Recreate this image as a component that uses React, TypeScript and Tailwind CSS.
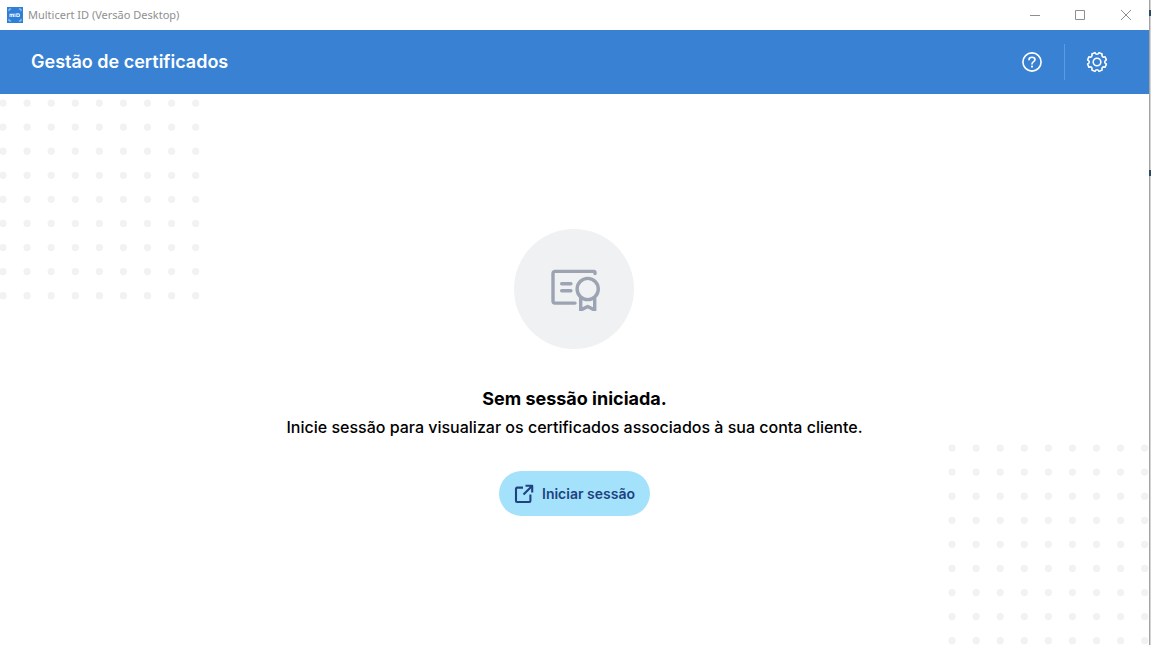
import React from 'react';

const dots = Array.from({ length: 9 }, (_, i) => i * 24 + 4);

const DotGrid = ({ className }: { className: string }) => (
  <svg className={className} width="201" height="201" viewBox="0 0 200.3 200.3" fill="#f1f2f4" aria-hidden="true">
    {dots.map((y) => dots.map((x) => <circle key={`${x}-${y}`} cx={x} cy={y} r="3.6" />))}
  </svg>
);

const LogoIcon = () => (
  <svg width="16" height="16" viewBox="0 0 16 16" fill="none" aria-hidden="true">
    <rect width="16" height="16" fill="#2f7fd6" />
    <path d="M2 4.2V2h2.2M11.8 2H14v2.2M14 11.8V14h-2.2M4.2 14H2v-2.2" stroke="#a9cdf2" />
    <path d="M3 10V7.4h3.4V10M4.7 7.5V10M8 6.4V10" stroke="#dcebfb" strokeWidth="1.1" />
    <path d="M9.8 6.9h1.5a1.3 1.3 0 0 1 0 2.6H9.8z" stroke="#dcebfb" strokeWidth="1.1" />
  </svg>
);

const HelpIcon = () => (
  <svg width="20" height="20" viewBox="0 0 20 20" fill="none" stroke="currentColor" strokeWidth="1.6" aria-hidden="true">
    <circle cx="10" cy="10" r="9.1" />
    <path d="M7 7.8C7 6.2 8.3 5.3 10 5.3s3 .9 3 2.4c0 1.9-3 1.9-3 4.2" strokeLinecap="round" />
    <circle cx="10" cy="14.6" r="1.1" fill="currentColor" stroke="none" />
  </svg>
);

const toothAngles = Array.from({ length: 8 }, (_, i) => 22.5 + i * 45);

const polar = (radius: number, degrees: number) => {
  const angle = (degrees * Math.PI) / 180;
  return `${(10 + radius * Math.cos(angle)).toFixed(2)} ${(10 + radius * Math.sin(angle)).toFixed(2)}`;
};

// each tooth is a short flat edge, followed by a rounded valley
const gearPath =
  toothAngles
    .map((a, i) => `${i === 0 ? 'M' : 'L'}${polar(9.6, a - 10)}L${polar(9.6, a + 10)}C${polar(7.2, a + 14)} ${polar(7.2, a + 31)} ${polar(9.6, a + 35)}`)
    .join('') + 'Z';

const GearIcon = () => (
  <svg className="overflow-visible" width="20" height="20" viewBox="0 0 20 20" fill="none" stroke="currentColor" strokeWidth="1.6" strokeLinejoin="round" aria-hidden="true">
    <path d={gearPath} />
    <circle cx="10" cy="10" r="3.8" />
  </svg>
);

const CertificateIcon = () => (
  <svg width="52" height="44" viewBox="0 0 52 44" fill="none" stroke="#9ca3b2" strokeWidth="3.4" strokeLinecap="round" strokeLinejoin="round" aria-hidden="true">
    <path d="M47 6.6V5.6a1.2 1.2 0 0 0-1.2-1.2H7a2 2 0 0 0-2 2v27.7a2 2 0 0 0 2 2h20" />
    <path d="M13.7 16.8h9.2M13.7 23.7h9.2" />
    <circle cx="39.7" cy="22" r="10.6" />
    <path d="M32.7 31.5v11.6l7-3.6 7 3.6V31.5" />
  </svg>
);

const OpenIcon = () => (
  <svg width="20" height="20" viewBox="0 0 20 20" fill="none" stroke="currentColor" strokeWidth="2.1" strokeLinejoin="round" aria-hidden="true">
    <path d="M9 3.6H3a1 1 0 0 0-1 1V17a1 1 0 0 0 1 1h12.4a1 1 0 0 0 1-1v-6.4" />
    <path d="M11.5 1.8h6.7v6.7M18 2l-8.5 8.5" />
  </svg>
);

const TitleBar = () => (
  <div className="flex h-[30px] items-center bg-white pb-px pl-[7px] text-[#8f8f8f]">
    <LogoIcon />
    <span className="ml-[5px] font-['Noto_Sans',sans-serif] text-[11px] leading-4">Multicert ID (Versão Desktop)</span>
    <div className="ml-auto flex h-full items-center">
      <button type="button" aria-label="Minimizar" className="flex h-full w-[45px] items-center justify-center">
        <svg width="10" height="10" viewBox="0 0 10 10" stroke="currentColor"><path d="M0 5.5h10" /></svg>
      </button>
      <button type="button" aria-label="Maximizar" className="flex h-full w-[46px] items-center justify-center">
        <svg width="10" height="10" viewBox="0 0 10 10" fill="none" stroke="currentColor"><path d="M.5.5h9v9h-9z" /></svg>
      </button>
      <button type="button" aria-label="Fechar" className="flex h-full w-[46px] items-center justify-center">
        <svg width="10" height="10" viewBox="0 0 10 10" stroke="currentColor"><path d="M0 0l10 10M10 0L0 10" /></svg>
      </button>
    </div>
  </div>
);

const App = () => {
  return (
    <div className="relative flex min-h-screen bg-[#d4d4d4] font-['Inter',sans-serif]">
      <div className="mr-px flex min-w-0 flex-1 flex-col border-r border-[#a3a3a3] bg-white">
        <TitleBar />

        <header className="flex h-16 items-center justify-between bg-[#3881d3] pr-8 pl-[31px] text-white">
          <h1 className="text-[18px] leading-7 font-semibold">Gestão de certificados</h1>
          <div className="flex items-center">
            <button type="button" aria-label="Ajuda" className="px-[22px] py-2">
              <HelpIcon />
            </button>
            <div className="h-9 w-px bg-[#5e9bdd]" />
            <button type="button" aria-label="Definições" className="py-2 pr-[10px] pl-[22px]">
              <GearIcon />
            </button>
          </div>
        </header>

        <main className="relative flex flex-1 flex-col items-center justify-center overflow-hidden pt-[6px]">
          {/* Background dots */}
          <DotGrid className="absolute top-[5px] left-[-1px]" />
          <DotGrid className="absolute right-0 bottom-0" />

          <div className="relative flex flex-col items-center text-center">
            <div className="flex size-[120px] items-center justify-center rounded-full bg-[#f0f1f3]">
              <CertificateIcon />
            </div>
            <h2 className="mt-9 text-[18px] leading-7 font-bold text-black">Sem sessão iniciada.</h2>
            <p className="mt-[2px] text-[16px] leading-6 font-medium text-black">
              Inicie sessão para visualizar os certificados associados à sua conta cliente.
            </p>
            <button
              type="button"
              className="mt-8 flex h-[45px] items-center gap-2 rounded-full bg-[#a4e2fc] px-[15px] text-[14px] leading-5 font-semibold text-[#204280]"
            >
              <OpenIcon />
              Iniciar sessão
            </button>
          </div>
        </main>
      </div>

      {/* Marks on the window edge */}
      <div className="absolute top-[10px] right-0 h-[6px] w-[2px] bg-[#2c4a66]" />
      <div className="absolute top-[170px] right-0 h-[6px] w-[2px] bg-[#2c4a66]" />
    </div>
  );
};

export default App;
